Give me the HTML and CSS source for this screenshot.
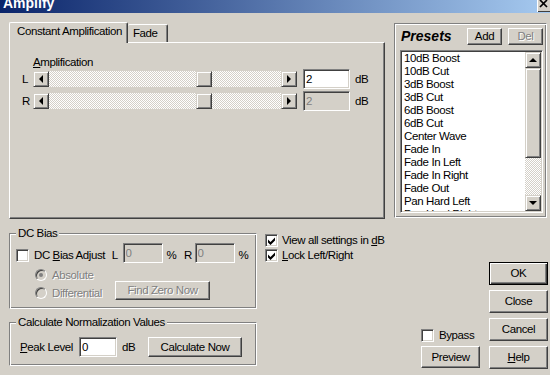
FILE: index.html
```html
<!DOCTYPE html>
<html lang="en">

<head>
  <meta charset="UTF-8">
  <meta name="viewport" content="width=device-width, initial-scale=1.0">
  <title>Amplify</title>
  <link rel="stylesheet" href="styles.css">
</head>

<body>
  <div class="window">
    <div class="titlebar">
      <span class="title">Amplify</span>
      <span class="close">
        <svg width="9" height="8" viewBox="0 0 9 8"><path d="M1 0 L8 7 M8 0 L1 7" stroke="#000" stroke-width="1.7" /></svg>
      </span>
    </div>

    <div class="upper">
      <div class="tabs">
        <div class="tab-strip">
          <div class="tab tab-active">Constant Amplification</div>
          <div class="tab tab-fade">Fade</div>
        </div>
        <div class="tab-panel">
          <div class="amp-label"><u>A</u>mplification</div>
          <div class="slider-row">
            <span class="chan">L</span>
            <div class="slider">
              <span class="sb-btn"><i class="arr-left"></i></span>
              <span class="track"><span class="sb-btn thumb"></span></span>
              <span class="sb-btn"><i class="arr-right"></i></span>
            </div>
            <input class="field" type="text" value="2">
            <span class="unit">dB</span>
          </div>
          <div class="slider-row">
            <span class="chan">R</span>
            <div class="slider">
              <span class="sb-btn"><i class="arr-left"></i></span>
              <span class="track"><span class="sb-btn thumb"></span></span>
              <span class="sb-btn"><i class="arr-right"></i></span>
            </div>
            <input class="field" type="text" value="2" disabled>
            <span class="unit">dB</span>
          </div>
        </div>
      </div>

      <div class="presets">
        <div class="presets-head">
          <span class="presets-title">Presets</span>
          <button class="btn btn-small">Add</button>
          <button class="btn btn-small" disabled>Del</button>
        </div>
        <div class="listbox">
          <ul class="items">
            <li>10dB Boost</li>
            <li>10dB Cut</li>
            <li>3dB Boost</li>
            <li>3dB Cut</li>
            <li>6dB Boost</li>
            <li>6dB Cut</li>
            <li>Center Wave</li>
            <li>Fade In</li>
            <li>Fade In Left</li>
            <li>Fade In Right</li>
            <li>Fade Out</li>
            <li>Pan Hard Left</li>
            <li>Pan Hard Right</li>
          </ul>
          <div class="vscroll">
            <span class="sb-btn"><i class="arr-up"></i></span>
            <span class="sb-btn vthumb"></span>
            <span class="vtrack"></span>
            <span class="sb-btn"><i class="arr-down"></i></span>
          </div>
        </div>
      </div>
    </div>

    <div class="lower">
      <div class="left-col">
        <div class="group dc-group">
          <div class="group-title">DC Bias</div>
          <div class="dc-row">
            <span class="check-label"><span class="checkbox"></span><span>DC <u>B</u>ias Adjust</span></span>
            <span class="lbl">L</span>
            <input class="field field-sm" type="text" value="0" disabled>
            <span class="pct">%</span>
            <span class="lbl">R</span>
            <input class="field field-sm" type="text" value="0" disabled>
            <span class="pct">%</span>
          </div>
          <div class="radio-row">
            <span class="radio-label"><span class="radio radio-on"></span><span class="off">Absolute</span></span>
          </div>
          <div class="radio-row">
            <span class="radio-label"><span class="radio"></span><span class="off">Differential</span></span>
            <button class="btn btn-find" disabled>Find Zero Now</button>
          </div>
        </div>

        <div class="group norm-group">
          <div class="group-title">Calculate Normalization Values</div>
          <div class="norm-row">
            <span class="peak"><u>P</u>eak Level</span>
            <input class="field field-peak" type="text" value="0">
            <span class="unit-wide">dB</span>
            <button class="btn btn-calc">Calculate Now</button>
          </div>
        </div>
      </div>

      <div class="options">
        <div class="opt">
          <span class="checkbox"><svg width="11" height="11" viewBox="0 0 11 11"><path d="M2 4.5 L4.5 7 L9 2.5 L9 5.5 L4.5 10 L2 7.5 Z" fill="#000" /></svg></span>
          <span>View all settings in <u>d</u>B</span>
        </div>
        <div class="opt">
          <span class="checkbox"><svg width="11" height="11" viewBox="0 0 11 11"><path d="M2 4.5 L4.5 7 L9 2.5 L9 5.5 L4.5 10 L2 7.5 Z" fill="#000" /></svg></span>
          <span><u>L</u>ock Left/Right</span>
        </div>
      </div>

      <div class="side">
        <div class="opt opt-bypass"><span class="checkbox"></span><span>Bypass</span></div>
        <button class="btn btn-preview">Preview</button>
      </div>

      <div class="buttons">
        <button class="btn btn-default">OK</button>
        <button class="btn">Close</button>
        <button class="btn">Cancel</button>
        <button class="btn"><u>H</u>elp</button>
      </div>
    </div>
  </div>
</body>

</html>
```

FILE: styles.css
```css
* {
  box-sizing: border-box;
}

body {
  margin: 0;
  background-color: #d4d0c8;
  /* gris Windows classique */
  font-family: "Liberation Sans", Arial, sans-serif;
  font-size: 11.5px;
  letter-spacing: -0.4px;
  line-height: 13px;
  white-space: nowrap;
  color: #000;
}

.window {
  width: 550px;
  height: 375px;
  overflow: hidden;
}

/* barre de titre */
.titlebar {
  display: flex;
  justify-content: space-between;
  height: 13px;
  overflow: hidden;
  background: linear-gradient(to right, #0a246a, #a6caf0);
}

.title {
  margin: -3px 0 0 3px;
  color: #fff;
  font-weight: bold;
  font-size: 14px;
  letter-spacing: 0;
  line-height: 13px;
}

.close {
  display: flex;
  flex: none;
  width: 16px;
  height: 12px;
  margin-right: -3px;
  padding-left: 2px;
  background-color: #d4d0c8;
  box-shadow: inset 1px 0 #fff, inset 0 -1px #404040;
}

/* boutons et champs */
.btn {
  display: flex;
  align-items: center;
  justify-content: center;
  height: 23px;
  padding: 0;
  font: inherit;
  letter-spacing: inherit;
  color: #000;
  background-color: #d4d0c8;
  border: 1px solid;
  border-color: #fff #404040 #404040 #fff;
  box-shadow: inset -1px -1px #808080;
}

.btn:disabled {
  color: #808080;
  text-shadow: 1px 1px #fff;
}

.btn-default {
  border-color: #000;
  box-shadow: inset 1px 1px #fff, inset -1px -1px #404040, inset -2px -2px #808080;
}

.field {
  flex: none;
  width: 47px;
  height: 20px;
  margin: 0 0 0 6px;
  padding: 0 2px;
  font: inherit;
  letter-spacing: inherit;
  color: #000;
  background-color: #fff;
  border: 1px solid;
  border-color: #808080 #fff #fff #808080;
  box-shadow: inset 1px 1px #404040, inset -1px -1px #d4d0c8;
  outline: none;
}

.field:disabled {
  color: #808080;
  background-color: #d4d0c8;
}

.sb-btn {
  display: flex;
  align-items: center;
  justify-content: center;
  flex: none;
  width: 16px;
  height: 16px;
  background-color: #d4d0c8;
  border: 1px solid;
  border-color: #d4d0c8 #404040 #404040 #d4d0c8;
  box-shadow: inset 1px 1px #fff, inset -1px -1px #808080;
}

.arr-left,
.arr-right,
.arr-up,
.arr-down {
  display: block;
  width: 0;
  height: 0;
  border-style: solid;
  border-color: transparent;
}

.arr-left {
  border-width: 4px 4px 4px 0;
  border-right-color: #000;
}

.arr-right {
  border-width: 4px 0 4px 4px;
  border-left-color: #000;
}

.arr-up {
  border-width: 0 4px 4px;
  border-bottom-color: #000;
}

.arr-down {
  border-width: 4px 4px 0;
  border-top-color: #000;
}

.checkbox {
  display: block;
  flex: none;
  width: 13px;
  height: 13px;
  background-color: #fff;
  border: 1px solid;
  border-color: #808080 #fff #fff #808080;
  box-shadow: inset 1px 1px #404040, inset -1px -1px #d4d0c8;
}

.checkbox svg {
  display: block;
}

/* partie haute : onglets + presets */
.upper {
  display: flex;
  align-items: flex-start;
  padding: 9px 0 0 9px;
}

.tabs {
  width: 376px;
  flex: none;
}

.tab-strip {
  display: flex;
  align-items: flex-end;
  height: 20px;
}

.tab {
  height: 18px;
  padding: 1px 0 0 4px;
  line-height: 15px;
  border: 1px solid #fff;
  border-right-color: #404040;
  border-bottom: none;
  border-radius: 2px 2px 0 0;
  box-shadow: inset -1px 0 #808080;
}

.tab-active {
  position: relative;
  z-index: 1;
  width: 119px;
  height: 21px;
  margin-bottom: -1px;
  padding-left: 7px;
  background-color: #d4d0c8;
}

.tab-fade {
  width: 40px;
  border-left: none;
  padding-left: 5px;
}

.tab-panel {
  height: 177px;
  padding: 13px 0 0 12px;
  border: 1px solid;
  border-color: #fff #404040 #404040 #fff;
  box-shadow: inset -1px -1px #808080;
}

.amp-label {
  margin-left: 11px;
}

.slider-row {
  display: flex;
  align-items: center;
  height: 20px;
}

.slider-row + .slider-row {
  margin-top: 2px;
}

.chan {
  width: 11px;
}

.slider {
  display: flex;
  width: 264px;
  height: 16px;
}

.track {
  flex: 1;
  background: repeating-conic-gradient(#fff 0 25%, #d4d0c8 0 50%) 0 0 / 2px 2px;
}

.thumb {
  margin-left: 147px;
}

.unit {
  margin-left: 5px;
}

.presets {
  flex: none;
  width: 153px;
  height: 195px;
  margin: 1px 0 0 9px;
  padding: 0 3px 0 5px;
  border: 1px solid;
  border-color: #808080 #fff #fff #808080;
  box-shadow: inset 1px 1px #fff, inset -1px -1px #808080;
}

.presets-head {
  display: flex;
  align-items: center;
  gap: 6px;
  height: 17px;
  margin-top: 4px;
}

.presets-title {
  flex: 1;
  padding-left: 1px;
  font-weight: bold;
  font-style: italic;
  font-size: 14px;
  letter-spacing: 0;
}

.btn-small {
  width: 35px;
  height: 17px;
}

.listbox {
  display: flex;
  height: 163px;
  margin-top: 5px;
  padding: 1px;
  background-color: #fff;
  border: 1px solid;
  border-color: #808080 #fff #fff #808080;
  box-shadow: inset 1px 1px #404040, inset -1px -1px #d4d0c8;
}

.items {
  flex: 1;
  margin: 0;
  padding: 0 0 0 2px;
  list-style: none;
  overflow: hidden;
}

.vscroll {
  display: flex;
  flex-direction: column;
  width: 16px;
}

.vthumb {
  height: 90px;
}

.vtrack {
  flex: 1;
  background: repeating-conic-gradient(#fff 0 25%, #d4d0c8 0 50%) 0 0 / 2px 2px;
}

/* partie basse */
.lower {
  display: flex;
  height: 156px;
  padding: 0 2px 0 9px;
}

.left-col {
  flex: none;
  width: 248px;
}

.group {
  border: 1px solid;
  border-color: #808080 #fff #fff #808080;
  box-shadow: inset 1px 1px #fff, inset -1px -1px #808080;
}

.group-title {
  display: table;
  margin: -7px 0 0 6px;
  padding: 0 2px;
  background-color: #d4d0c8;
}

.dc-group {
  height: 76px;
  margin-top: 14px;
}

.dc-row {
  display: flex;
  align-items: flex-end;
  height: 20px;
  margin: 3px 0 3px;
  padding-left: 6px;
}

.check-label {
  display: flex;
  align-items: center;
  gap: 5px;
  width: 99px;
  margin-bottom: 1px;
}

.lbl {
  width: 11px;
  margin-bottom: 1px;
}

.field-sm {
  width: 40px;
  margin-left: 0;
}

.pct {
  width: 22px;
  padding-left: 4px;
  margin-bottom: 1px;
}

.radio-row {
  display: flex;
  align-items: center;
  height: 18px;
  padding-left: 25px;
}

.radio-label {
  display: flex;
  align-items: center;
  gap: 5px;
  width: 80px;
}

.radio {
  position: relative;
  flex: none;
  width: 12px;
  height: 12px;
  border-radius: 50%;
  background-color: #d4d0c8;
  border: 1px solid;
  border-color: #808080 #fff #fff #808080;
  box-shadow: inset 1px 1px #404040;
}

.radio-on::after {
  content: "";
  position: absolute;
  left: 3px;
  top: 3px;
  width: 4px;
  height: 4px;
  border-radius: 50%;
  background-color: #808080;
}

.off {
  color: #808080;
  text-shadow: 1px 1px #fff;
}

.btn-find {
  align-self: flex-start;
  width: 95px;
  height: 19px;
  margin-top: -3px;
}

.norm-group {
  height: 44px;
  margin-top: 13px;
}

.norm-row {
  display: flex;
  align-items: center;
  height: 20px;
  margin-top: 8px;
  padding-left: 10px;
}

.peak {
  width: 59px;
}

.field-peak {
  width: 38px;
  margin-left: 0;
}

.unit-wide {
  width: 31px;
  padding-left: 5px;
}

.btn-calc {
  width: 94px;
  height: 20px;
}

.options {
  display: flex;
  flex: 1;
  flex-direction: column;
  gap: 2px;
  margin-left: 8px;
  padding-top: 15px;
}

.opt {
  display: flex;
  align-items: center;
  gap: 4px;
  height: 13px;
}

.side {
  display: flex;
  flex: none;
  flex-direction: column;
  justify-content: flex-end;
  gap: 4px;
  width: 59px;
  padding-bottom: 7px;
}

.opt-bypass {
  gap: 5px;
}

.btn-preview {
  height: 22px;
}

.buttons {
  display: flex;
  flex: none;
  flex-direction: column;
  gap: 5px;
  width: 59px;
  margin-left: 9px;
  padding-top: 43px;
}
```
